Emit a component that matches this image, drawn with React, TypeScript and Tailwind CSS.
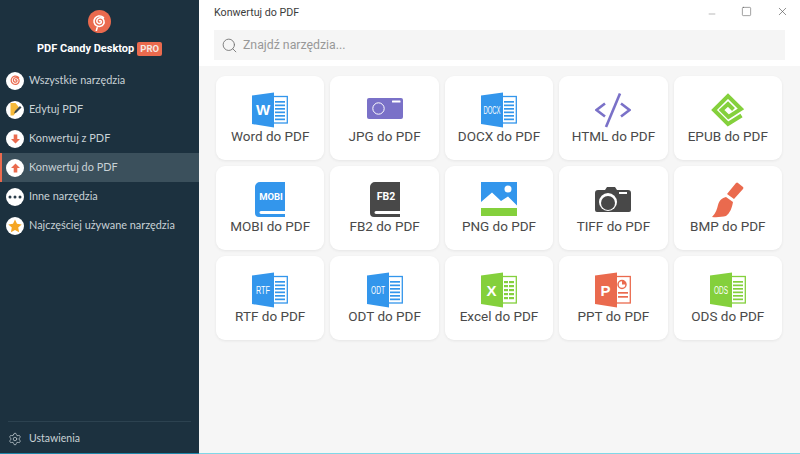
import { Search, Settings, X, Minus, Square } from "lucide-react";
import type { ReactNode } from "react";

const BLUE = "#3396ec";
const GREEN = "#84d03c";
const RED = "#ea6a4e";
const PURPLE = "#7a71c8";
const DARK = "#484848";

function Spiral({ color, size, stick }: { color: string; size: number; stick?: boolean }) {
  return (
    <svg width={size} height={size} viewBox="0 0 24 24" fill="none" stroke={color} strokeWidth="2" strokeLinecap="round">
      <path d="M12 11c1.300-.7 2.700.4 2.300 1.900-.5 1.800-3 2.300-4.500 1-1.900-1.600-1.400-4.700.7-5.900 2.600-1.500 6-.2 7 2.600 1.100 3.300-1 6.800-4.300 7.500-3.500.8-7.300-1.400-8-5-.7-3.700 1.800-7.300 5.500-8 2.300-.4 4.700.3 6.300 2" />
      {stick && <path d="M9 20l-1 3.500" />}
    </svg>
  );
}

// cover page + ruled sheet, shared by Word/DOCX/RTF/ODT/ODS
function DocIcon({ color, label, small }: { color: string; label: string; small?: boolean }) {
  return (
    <svg width="36" height="36" viewBox="0 0 36 36">
      <rect x="20" y="4.500" width="15.300" height="26.500" fill="#fff" stroke={color} strokeWidth="1.300" />
      {[9, 12.500, 16, 19.500, 23, 26.500].map((y) => (
        <rect key={y} x="23" y={y} width="10" height="1.700" fill={color} />
      ))}
      <path d="M0 3.500 22 .5v35L0 32z" fill={color} />
      <text
        x="11"
        y={small ? 21.500 : 23}
        textAnchor="middle"
        fill="#fff"
        fontFamily="'Liberation Sans', sans-serif"
        fontWeight={small ? 400 : 700}
        fontSize={small ? 10 : 15}
        textLength={small ? (label.length > 3 ? 17 : 14) : undefined}
        lengthAdjust="spacingAndGlyphs"
      >
        {label}
      </text>
    </svg>
  );
}

function ExcelIcon() {
  return (
    <svg width="36" height="36" viewBox="0 0 36 36">
      <rect x="20" y="4.500" width="15.300" height="26.500" fill="#fff" stroke={GREEN} strokeWidth="1.300" />
      {[9, 13, 17, 21, 25].map((y) => (
        <rect key={y} x="23" y={y} width="10" height="2.200" fill={GREEN} />
      ))}
      <rect x="27" y="8" width="1" height="20" fill="#fff" />
      <path d="M0 3.500 22 .5v35L0 32z" fill={GREEN} />
      <text x="10.500" y="23.500" textAnchor="middle" fill="#fff" fontFamily="'Liberation Sans', sans-serif" fontWeight="700" fontSize="15">
        X
      </text>
    </svg>
  );
}

function PptIcon() {
  return (
    <svg width="36" height="36" viewBox="0 0 36 36">
      <rect x="20" y="4.500" width="15.300" height="26.500" fill="#fff" stroke={RED} strokeWidth="1.300" />
      <circle cx="27" cy="12.500" r="4" fill="none" stroke={RED} strokeWidth="1.500" />
      <path d="M27 12.500V8.500a4 4 0 0 1 4 4z" fill={RED} />
      <rect x="23" y="20" width="10" height="1.700" fill={RED} />
      <rect x="23" y="24" width="10" height="1.700" fill={RED} />
      <path d="M0 3.500 22 .5v35L0 32z" fill={RED} />
      <text x="10.500" y="23.500" textAnchor="middle" fill="#fff" fontFamily="'Liberation Sans', sans-serif" fontWeight="700" fontSize="15">
        P
      </text>
    </svg>
  );
}

function JpgIcon() {
  return (
    <svg width="36" height="36" viewBox="0 0 36 36">
      <rect x="0" y="6" width="36" height="21" rx="2" fill={PURPLE} />
      <circle cx="11.500" cy="16.500" r="5.700" fill="none" stroke="#fff" strokeWidth="1" />
      <rect x="25" y="8.500" width="8.500" height="2" rx="0.500" fill="#fff" />
    </svg>
  );
}

function HtmlIcon() {
  return (
    <svg width="36" height="36" viewBox="0 0 36 36" fill="none" stroke={PURPLE} strokeWidth="2.600">
      <path d="M10 11.500 1.500 18l8.500 6.500" />
      <path d="M26 11.500 34.500 18 26 24.500" />
      <path d="M25 1.500 11 35" />
    </svg>
  );
}

function EpubIcon() {
  return (
    <svg width="36" height="36" viewBox="0 0 36 36" fill="none" stroke={GREEN} strokeWidth="4">
      <path d="M31.500 23.500 18 32 4 18 18 4 31 17 18.500 25 11.500 18 18 12 23.500 17.500" />
    </svg>
  );
}

function BookIcon({ color, label }: { color: string; label: string }) {
  return (
    <svg width="36" height="36" viewBox="0 0 36 36">
      <path d="M33 0H8a5 5 0 0 0-5 5v26a4 4 0 0 0 4 4h26v-3H9c-2 0-2-3 0-3h24z" fill={color} />
      <text x="19" y="18" textAnchor="middle" fill="#fff" fontFamily="Roboto, sans-serif" fontWeight="700" fontSize={label.length > 3 ? 9.500 : 10.500}>
        {label}
      </text>
    </svg>
  );
}

function PngIcon() {
  return (
    <svg width="36" height="36" viewBox="0 0 36 36">
      <rect x="0" y="0" width="36" height="26" fill={BLUE} />
      <path d="M0 20 11 10.500l9 8.500 7-4.500 9 9V26H0z" fill="#fff" />
      <circle cx="27" cy="7" r="3.500" fill="#fff" />
      <rect x="0" y="26" width="36" height="8" fill={GREEN} />
    </svg>
  );
}

function TiffIcon() {
  return (
    <svg width="36" height="36" viewBox="0 0 36 36">
      <path d="M3 8h7l2-3h8l2 3h11a3 3 0 0 1 3 3v17a2 2 0 0 1-2 2H2a2 2 0 0 1-2-2V11a3 3 0 0 1 3-3z" fill={DARK} />
      <circle cx="13" cy="20" r="9" fill="#fff" />
      <circle cx="13" cy="21" r="7" fill={DARK} />
      <rect x="24" y="10" width="8" height="2" fill="#fff" />
    </svg>
  );
}

function BmpIcon() {
  return (
    <svg width="36" height="36" viewBox="0 0 36 36" fill={RED}>
      <path d="M17 12 26 1c.8-.8 1.500-.8 2 0l5 4c.6.7.4 1.300 0 2L24 17z" />
      <path d="M16 15 23 20c-1 6-3 11-7 14-4 1-9 1.500-14 1 4-4 5-8 6-12 1.500-5 4-7 8-8z" />
    </svg>
  );
}

const tools: { label: string; icon: ReactNode }[] = [
  { label: "Word do PDF", icon: <DocIcon color={BLUE} label="W" /> },
  { label: "JPG do PDF", icon: <JpgIcon /> },
  { label: "DOCX do PDF", icon: <DocIcon color={BLUE} label="DOCX" small /> },
  { label: "HTML do PDF", icon: <HtmlIcon /> },
  { label: "EPUB do PDF", icon: <EpubIcon /> },
  { label: "MOBI do PDF", icon: <BookIcon color={BLUE} label="MOBI" /> },
  { label: "FB2 do PDF", icon: <BookIcon color={DARK} label="FB2" /> },
  { label: "PNG do PDF", icon: <PngIcon /> },
  { label: "TIFF do PDF", icon: <TiffIcon /> },
  { label: "BMP do PDF", icon: <BmpIcon /> },
  { label: "RTF do PDF", icon: <DocIcon color={BLUE} label="RTF" small /> },
  { label: "ODT do PDF", icon: <DocIcon color={BLUE} label="ODT" small /> },
  { label: "Excel do PDF", icon: <ExcelIcon /> },
  { label: "PPT do PDF", icon: <PptIcon /> },
  { label: "ODS do PDF", icon: <DocIcon color={GREEN} label="ODS" small /> },
];

const nav: { label: string; active?: boolean; icon: ReactNode }[] = [
  { label: "Wszystkie narzędzia", icon: <Spiral color={RED} size={15} /> },
  {
    label: "Edytuj PDF",
    icon: (
      <svg width="13" height="13" viewBox="0 0 13 13">
        <path d="M1.500 0h5l4 5-6 7.500h-3z" fill="#f5b93a" />
        <path d="M5 10.500l1-2.500 5-5 1.500 1.500-5 5z" fill="#3a4650" />
      </svg>
    ),
  },
  {
    label: "Konwertuj z PDF",
    icon: (
      <svg width="9" height="10" viewBox="0 0 10 10">
        <path d="M3 0h4v5h3L5 10 0 5h3z" fill={RED} />
      </svg>
    ),
  },
  {
    label: "Konwertuj do PDF",
    active: true,
    icon: (
      <svg width="9" height="10" viewBox="0 0 10 10">
        <path d="M3 10h4V5h3L5 0 0 5h3z" fill={RED} />
      </svg>
    ),
  },
  {
    label: "Inne narzędzia",
    icon: (
      <svg width="14" height="4" viewBox="0 0 14 4" fill="#2a3c49">
        <circle cx="2" cy="2" r="1.500" />
        <circle cx="7" cy="2" r="1.500" />
        <circle cx="12" cy="2" r="1.500" />
      </svg>
    ),
  },
  {
    label: "Najczęściej używane narzędzia",
    icon: (
      <svg width="14" height="14" viewBox="0 0 14 14">
        <path d="M7 .5l2 4.300 4.700.6-3.500 3.200.9 4.700L7 11l-4.100 2.300.9-4.700L.3 5.400 5 4.800z" fill="#f5a623" />
      </svg>
    ),
  },
];

export default function App() {
  return (
    <div className="flex h-[454px] w-full overflow-hidden bg-white font-['Roboto',sans-serif]">
      <aside className="flex w-[199px] shrink-0 flex-col border-b border-[#1e86a8] bg-[#1c313f]">
        <div className="flex flex-col items-center pt-[10px]">
          <div className="flex h-[23px] w-[23px] items-center justify-center rounded-full bg-[#ea6a4e]">
            <Spiral color="#fff" size={19} stick />
          </div>
          <div className="mt-[9px] flex h-[14px] items-center gap-[3px]">
            <span className="text-[11px] font-bold text-white">PDF Candy Desktop</span>
            <span className="rounded-[2px] bg-[#ea6a4e] px-[3px] text-[9.500px] leading-[14px] font-bold text-[#f4e8e4]">PRO</span>
          </div>
        </div>
        <nav className="mt-[10px] flex flex-col font-['Lato',sans-serif]">
          {nav.map((item) => (
            <div
              key={item.label}
              className={
                item.active
                  ? "flex h-[29px] items-center gap-[5px] border-l-2 border-[#ea6a4e] bg-[#3b505c] pl-[4px]"
                  : "flex h-[29px] items-center gap-[5px] pl-[6px]"
              }
            >
              <span className="flex h-[18px] w-[18px] items-center justify-center rounded-full bg-white">{item.icon}</span>
              <span className="text-[10.900px] text-[#c9d2d6]">{item.label}</span>
            </div>
          ))}
        </nav>
        <div className="mt-auto mx-[8px] flex h-[32px] items-center gap-[7px] border-t border-[#2c4250] pt-[3px]">
          <Settings size={14} strokeWidth={1.300} className="text-[#c0cacf]" />
          <span className="font-['Lato',sans-serif] text-[10.500px] text-[#c9d2d6]">Ustawienia</span>
        </div>
      </aside>

      <main className="flex min-w-0 flex-1 flex-col">
        <header className="flex h-[66px] shrink-0 flex-col bg-white pl-[15px] pr-[11px]">
          <div className="flex h-[30px] items-start justify-between">
            <span className="pt-[5px] text-[10.700px] leading-[16px] text-[#3c3c3c]">Konwertuj do PDF</span>
            <div className="flex items-center gap-[24px] pt-[3px] text-[#555]">
              <Minus size={10} strokeWidth={1} className="mt-[6px]" />
              <Square size={11} strokeWidth={1.200} />
              <X size={13} strokeWidth={1.200} />
            </div>
          </div>
          <div className="flex h-[30px] w-[571px] items-center gap-[5px] bg-[#f5f5f5] pl-[7px]">
            <Search size={17} strokeWidth={1.300} className="text-[#777]" />
            <span className="text-[12.300px] text-[#989898]">Znajdź narzędzia...</span>
          </div>
        </header>
        <section className="flex-1 border-b border-[#7fd8e8] bg-[#f6f6f6] pl-[17px] pr-[18px] pt-[10px]">
          <div className="grid grid-cols-5 auto-rows-[84px] gap-[6px]">
            {tools.map((tool) => (
              <div
                key={tool.label}
                className="flex flex-col items-center rounded-[9px] bg-white pt-[16px] shadow-[0_1px_3px_rgba(0,0,0,0.07)]"
              >
                {tool.icon}
                <span className="text-[13.500px] leading-[16px] whitespace-nowrap text-[#4a4a4a]">{tool.label}</span>
              </div>
            ))}
          </div>
        </section>
      </main>
    </div>
  );
}
